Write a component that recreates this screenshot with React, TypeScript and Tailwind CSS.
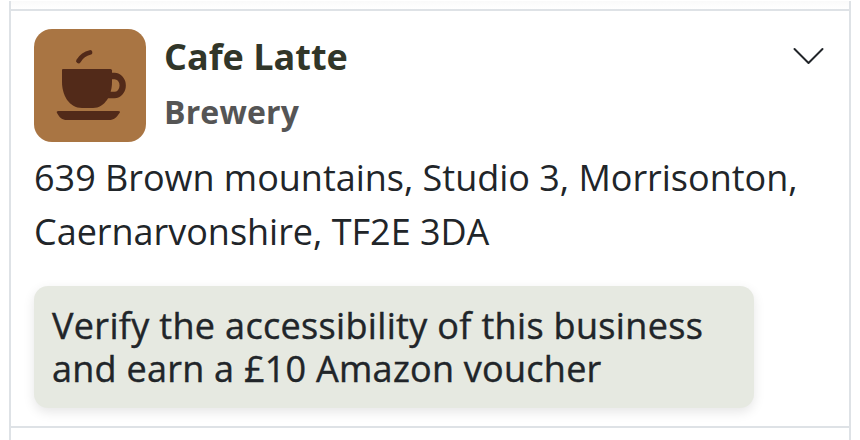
function CupIcon() {
  return (
    <svg viewBox="0 0 112 113" className="h-[113px] w-28 shrink-0 rounded-[18px] bg-[#a97543]" fill="#522a19">
      <path d="M29 40H76.500Q78 40 78 41.500V53C78 66 71 79 59 79H48C35 79 28 66 28 53V41Q28 40 29 40Z" />
      <path d="M76 47H80.500A8.200 9.500 0 0 1 80.500 66H73" fill="none" stroke="#522a19" strokeWidth="6.300" />
      <path d="M44.500 32C47.500 27 50.500 24.500 56 23.500" fill="none" stroke="#522a19" strokeWidth="4.800" strokeLinecap="round" />
      <path d="M24.500 82H84Q87 82 85.500 84C82.500 88.500 80 91 75 91H33C28 91 25.500 88.500 23 84Q22 82 24.500 82Z" />
    </svg>
  );
}

export default function App() {
  return (
    <main className="h-[440px] overflow-hidden bg-white px-[9px] pt-px font-['Open_Sans',sans-serif] text-[#212529]">
      <div className="h-[439px] border-x-2 border-[#dee2e6]">
        <div className="h-2 bg-linear-to-b from-[#fafafa] to-white" />
        <section className="h-[419px] border-y-2 border-[#dee2e6] px-[23px] pt-[18px]">
          <header className="flex">
            <CupIcon />
            <div className="ml-[18px] flex-1 pt-1.5">
              <h2 className="text-[36px] leading-[43px] font-bold text-[#313629]">Cafe Latte</h2>
              <p className="mt-[15px] text-[32px] leading-[38px] font-bold tracking-[0.15px] text-[#555]">Brewery</p>
            </div>
            <svg viewBox="0 0 32 20" className="mt-[17px] mr-0.5 h-5 w-8" fill="none" stroke="#212529" strokeWidth="2" strokeLinecap="round" strokeLinejoin="round">
              <path d="M2.500 3L16.500 17L30.500 3" />
            </svg>
          </header>
          <p className="mt-[9px] text-[36px] leading-[54px] tracking-[-0.02px] whitespace-nowrap">
            639 Brown mountains, Studio 3, Morrisonton,
            <br />
            Caernarvonshire, TF2E 3DA
          </p>
          <div className="mt-[27px] h-[122px] w-[720px] rounded-[14px] bg-[#e6e9e1] p-[18px] text-[36px] leading-[43px] tracking-[0.33px] whitespace-nowrap [-webkit-text-stroke:0.4px_#212529] shadow-[0_4px_12px_rgba(0,0,0,0.1)]">
            Verify the accessibility of this business
            <br />
            <span className="tracking-[0.25px]">and earn a £10 Amazon voucher</span>
          </div>
        </section>
      </div>
    </main>
  );
}
